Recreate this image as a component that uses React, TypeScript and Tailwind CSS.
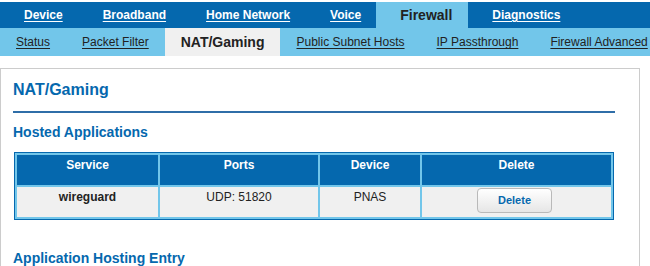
import React from "react";

const topTabs = [
  { label: "Device", cls: "pl-[24px] pr-[20px]" },
  { label: "Broadband", cls: "px-[20px]" },
  { label: "Home Network", cls: "px-[20px]" },
  { label: "Voice", cls: "pl-[20px] pr-[15px]" },
  { label: "Firewall", cls: "pl-[24px] pr-[16px]", active: true },
  { label: "Diagnostics", cls: "pl-[24px] pr-[20px]" },
];

const subTabs = [
  { label: "Status" },
  { label: "Packet Filter" },
  { label: "NAT/Gaming", active: true },
  { label: "Public Subnet Hosts" },
  { label: "IP Passthrough" },
  { label: "Firewall Advanced" },
];

const rows = [{ service: "wireguard", ports: "UDP: 51820", device: "PNAS" }];

export default function App() {
  return (
    <div className="h-[266px] overflow-hidden bg-white font-['Liberation_Sans',Arial,sans-serif] text-[#222]">
      {/* main nav */}
      <div className="mt-[2px] flex h-[26px] items-stretch bg-[#0568ae]">
        {topTabs.map((t) =>
          t.active ? (
            <div
              key={t.label}
              className={`flex items-center bg-[#72c6ea] text-[14px] font-bold text-[#222] ${t.cls}`}
            >
              {t.label}
            </div>
          ) : (
            <a
              key={t.label}
              className={`flex items-center text-[12px] font-bold text-white underline underline-offset-2 ${t.cls}`}
            >
              {t.label}
            </a>
          )
        )}
      </div>

      {/* sub nav */}
      <div className="flex h-[28px] items-stretch bg-[#72c6ea]">
        {subTabs.map((t) =>
          t.active ? (
            <div
              key={t.label}
              className="flex items-center bg-[#f0f0f0] px-4 text-[14px] font-bold text-[#222]"
            >
              {t.label}
            </div>
          ) : (
            <a
              key={t.label}
              className="flex items-center whitespace-nowrap px-4 text-[12px] text-[#222] underline underline-offset-2"
            >
              {t.label}
            </a>
          )
        )}
      </div>

      {/* content panel */}
      <div className="mt-3 h-[198px] w-[640px] border border-b-0 border-[#cccccc] pl-3 pr-6 pt-[11px]">
        <h1 className="text-[16px] font-bold leading-[20px] text-[#0568ae]">NAT/Gaming</h1>
        <div className="mt-[11px] h-[2px] bg-[#2f6ea8]" />

        <h2 className="mt-[11px] text-[14px] font-bold leading-[16px] text-[#0568ae]">
          Hosted Applications
        </h2>

        <table className="ml-[1px] mt-[12px] w-[600px] border-separate border-spacing-[2px] border border-[#0568ae] bg-[#72c6ea] text-[12px]">
          <thead>
            <tr>
              <th className="h-[30px] w-[141px] bg-[#0568ae] pt-[1px] align-top font-bold text-white">Service</th>
              <th className="h-[30px] w-[158px] bg-[#0568ae] pt-[1px] align-top font-bold text-white">Ports</th>
              <th className="h-[30px] w-[100px] bg-[#0568ae] pt-[1px] align-top font-bold text-white">Device</th>
              <th className="h-[30px] w-[189px] bg-[#0568ae] pt-[1px] align-top font-bold text-white">Delete</th>
            </tr>
          </thead>
          <tbody>
            {rows.map((r) => (
              <tr key={r.service}>
                <td className="h-[30px] bg-[#f0f0f0] pt-[1px] text-center align-top font-bold">{r.service}</td>
                <td className="h-[30px] bg-[#f0f0f0] pt-[1px] text-center align-top">{r.ports}</td>
                <td className="h-[30px] bg-[#f0f0f0] pt-[1px] text-center align-top">{r.device}</td>
                <td className="h-[30px] bg-[#f0f0f0] pt-[1px] pr-[4px] text-center align-top">
                  <button className="h-[25px] w-[75px] rounded-[4px] border border-[#b9b9b9] bg-gradient-to-b from-white to-[#e6e6e6] text-[11px] font-bold text-[#0568ae]">
                    Delete
                  </button>
                </td>
              </tr>
            ))}
          </tbody>
        </table>

        <h2 className="mt-[30px] text-[14px] font-bold leading-[16px] text-[#0568ae]">
          Application Hosting Entry
        </h2>
      </div>
    </div>
  );
}
